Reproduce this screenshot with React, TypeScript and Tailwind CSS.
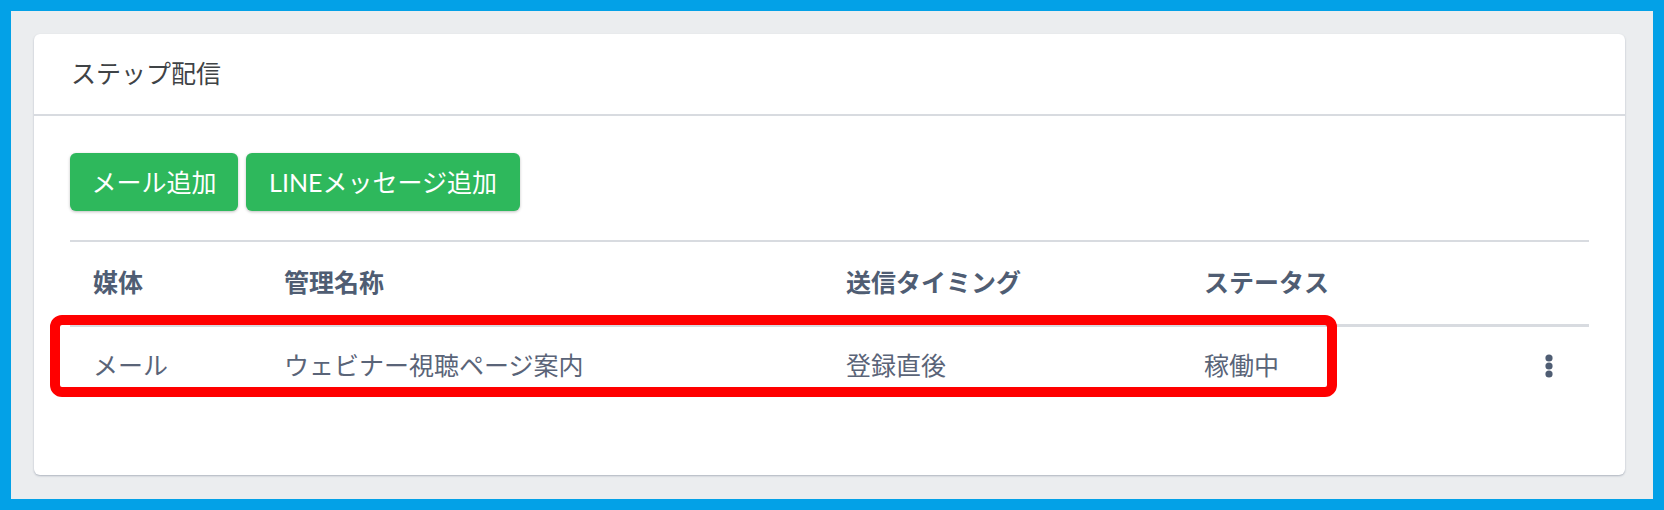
import React from "react";

const font = "font-['Lato','Noto_Sans_CJK_JP',sans-serif]";

const columns = ["媒体", "管理名称", "送信タイミング", "ステータス"];

const rows = [
  { media: "メール", name: "ウェビナー視聴ページ案内", timing: "登録直後", status: "稼働中" },
];

const KebabIcon = () => (
  <svg width="8" height="24" viewBox="0 0 8 24" fill="#4f5d73">
    <circle cx="4" cy="4" r="3.6" />
    <circle cx="4" cy="12" r="3.6" />
    <circle cx="4" cy="20" r="3.6" />
  </svg>
);

const GreenButton: React.FC<{ label: string; width: string }> = ({ label, width }) => (
  <button
    className={`${width} h-[58px] flex items-center justify-center rounded-[6px] bg-[#2eb85c] text-white text-[25px] leading-none shadow-[0_1px_3px_rgba(0,0,0,0.25)]`}
  >
    {label}
  </button>
);

const gridCols = "grid grid-cols-[191px_562px_358px_1fr_80px]";

export default function App() {
  return (
    <div className={`w-[1664px] h-[510px] bg-[#03a1e7] p-[11px] ${font}`}>
      <div className="h-full bg-[#ebedef] pl-[23px] pr-[28px] pt-[23px]">
        <div className="bg-white rounded-[6px] shadow-[0_1px_2px_rgba(60,75,100,0.35)]">
          {/* header */}
          <div className="h-[82px] px-[37px] flex items-center border-b-2 border-[#d8dbe0] text-[25px] text-[#3f4346]">
            ステップ配信
          </div>

          {/* body */}
          <div className="px-[36px] pt-[37px] pb-[70px]">
            <div className="flex gap-2">
              <GreenButton label="メール追加" width="w-[168px]" />
              <GreenButton label="LINEメッセージ追加" width="w-[274px]" />
            </div>

            <div className="mt-[29px] border-t-2 border-[#d8dbe0]">
              <div className={`${gridCols} h-[85px] items-center border-b-[3px] border-[#d8dbe0] text-[25px] font-bold text-[#4f5d73]`}>
                {columns.map((c) => (
                  <div key={c} className="pl-[23px]">
                    {c}
                  </div>
                ))}
                <div />
              </div>

              {rows.map((r) => (
                <div key={r.name} className={`relative ${gridCols} h-[78px] items-center text-[25px] text-[#5a6478]`}>
                  <div className="pl-[23px]">{r.media}</div>
                  <div className="pl-[23px]">{r.name}</div>
                  <div className="pl-[23px]">{r.timing}</div>
                  <div className="pl-[23px]">{r.status}</div>
                  <div className="flex justify-center">
                    <KebabIcon />
                  </div>
                  {/* highlight annotation */}
                  <div className="pointer-events-none absolute left-[-20px] top-[-12px] w-[1287px] h-[82px] border-[10px] border-[#ff0000] rounded-[12px]" />
                </div>
              ))}
            </div>
          </div>
        </div>
      </div>
    </div>
  );
}
